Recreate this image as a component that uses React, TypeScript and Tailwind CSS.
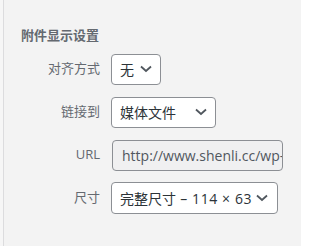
import React from "react";

const Chevron = () => (
  <svg width="12" height="8" viewBox="0 0 12 8" className="shrink-0">
    <path d="M1 1.5l5 4.5 5-4.5" fill="none" stroke="#50575e" strokeWidth="1.8" />
  </svg>
);

const Row = ({ label, children }: { label: string; children: React.ReactNode }) => (
  <div className="flex items-center h-[32px]">
    <span className="w-[80px] text-right text-[13px] text-[#646970] mr-[11px] shrink-0">{label}</span>
    {children}
  </div>
);

export default function App() {
  const font = { fontFamily: '"Open Sans","Noto Sans CJK SC",sans-serif' };
  return (
    <div className="w-[301px] h-[246px] bg-[#f3f3f3] flex" style={font}>
      <div className="w-[3px] bg-[#f6f6f6]" />
      <div className="w-px bg-[#dcdcde]" />
      <div className="flex-1 flex flex-col pt-[27px] pl-[16px]">
        <h2 className="text-[13px] font-bold text-[#646970] leading-[16px] ml-[1px]">附件显示设置</h2>
        <div className="flex flex-col gap-[11px] mt-[10px]">
          <Row label="对齐方式">
            <div className="w-[50px] h-[31px] bg-white border border-[#8c8f94] rounded-[4px] flex items-center justify-between pl-[8px] pr-[8px] text-[14px] text-[#2c3338]">
              <span>无</span>
              <Chevron />
            </div>
          </Row>
          <Row label="链接到">
            <div className="w-[105px] h-[31px] bg-white border border-[#8c8f94] rounded-[4px] flex items-center justify-between pl-[8px] pr-[8px] text-[14px] text-[#2c3338]">
              <span>媒体文件</span>
              <Chevron />
            </div>
          </Row>
          <Row label="URL">
            <div className="w-[171px] h-[31px] ml-[1px] bg-[#f0f0f1] border border-[#8c8f94] rounded-[4px] flex items-center pl-[9px] text-[14px] text-[#50575e] overflow-hidden whitespace-nowrap">
              <span>http://www.shenli.cc/wp-content/uploads/</span>
            </div>
          </Row>
          <Row label="尺寸">
            <div className="w-[167px] h-[32px] bg-white border border-[#8c8f94] rounded-[4px] flex items-center justify-between pl-[8px] pr-[9px] text-[14px] text-[#2c3338] whitespace-nowrap">
              <span>
                完整尺寸<span className="tracking-[0.6px]"> – 114 × 63</span>
              </span>
              <Chevron />
            </div>
          </Row>
        </div>
      </div>
    </div>
  );
}
